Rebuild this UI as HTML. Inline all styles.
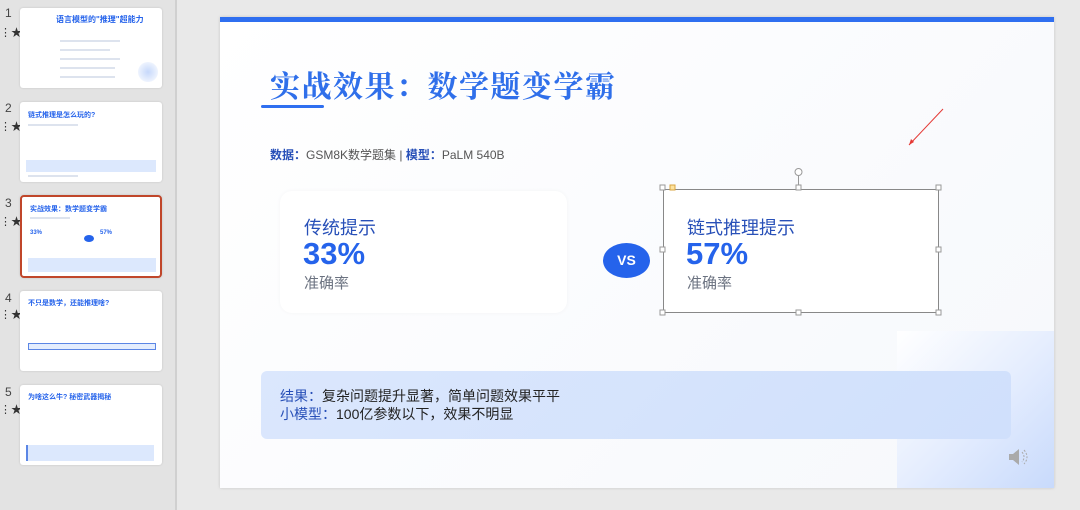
<!DOCTYPE html>
<html><head><meta charset="utf-8"><style>
*{margin:0;padding:0;box-sizing:border-box}
body{width:1080px;height:510px;overflow:hidden;background:#e9e9e9;font-family:"Liberation Sans","Noto Sans CJK SC",sans-serif;position:relative}
.abs{position:absolute}
.side{left:0;top:0;width:177px;height:510px;background:#e3e3e3;border-right:2px solid #d0d0d0}
.num{left:5px;font-size:12px;color:#444}
.star{left:0;font-size:11px;color:#333}
.th{left:20px;width:142px;height:80px;background:#fff;border-radius:3px;box-shadow:0 0 2px rgba(0,0,0,.15);overflow:hidden}
.th .t{position:absolute;left:8px;top:7px;font-size:7px;color:#2563eb;font-weight:bold}
.ln{position:absolute;height:2px;background:#dde3ee}
.slide{left:220px;top:17px;width:834px;height:471px;background:linear-gradient(135deg,#fff,#f6f8fc);box-shadow:0 0 3px rgba(0,0,0,.15);overflow:hidden}
</style></head><body>
<div class="abs side"></div>
<div class="abs num" style="top:6px">1</div><div class="abs star" style="top:24px">⋮★</div>
<div class="abs num" style="top:101px">2</div><div class="abs star" style="top:118px">⋮★</div>
<div class="abs num" style="top:196px">3</div><div class="abs star" style="top:213px">⋮★</div>
<div class="abs num" style="top:291px">4</div><div class="abs star" style="top:306px">⋮★</div>
<div class="abs num" style="top:385px">5</div><div class="abs star" style="top:401px">⋮★</div>

<div class="abs th" style="top:8px"><div class="t" style="left:36px;top:6px;font-size:8px">语言模型的"推理"超能力</div>
<div class="ln" style="left:40px;top:32px;width:60px"></div><div class="ln" style="left:40px;top:41px;width:50px"></div><div class="ln" style="left:40px;top:50px;width:60px"></div><div class="ln" style="left:40px;top:59px;width:55px"></div><div class="ln" style="left:40px;top:68px;width:55px"></div>
<div style="position:absolute;right:4px;bottom:6px;width:20px;height:20px;border-radius:50%;background:radial-gradient(#c6d8fb,#fff0)"></div></div>
<div class="abs th" style="top:102px"><div class="t" style="top:8px">链式推理是怎么玩的?</div><div class="ln" style="left:8px;top:22px;width:50px"></div>
<div style="position:absolute;left:6px;top:58px;width:130px;height:12px;background:#dce8fd"></div><div class="ln" style="left:8px;top:73px;width:50px"></div></div>
<div class="abs th" style="top:195px;height:83px;border:2px solid #c0462a;border-radius:4px"><div class="t">实战效果：数学题变学霸</div>
<div class="ln" style="left:8px;top:20px;width:40px"></div>
<div style="position:absolute;left:8px;top:33px;font-size:6px;color:#2563eb;font-weight:bold">33%</div>
<div style="position:absolute;left:62px;top:38px;width:10px;height:7px;border-radius:50%;background:#2563eb"></div>
<div style="position:absolute;left:78px;top:33px;font-size:6px;color:#2563eb;font-weight:bold">57%</div>
<div style="position:absolute;left:6px;top:61px;width:128px;height:14px;background:#dce8fd"></div></div>
<div class="abs th" style="top:291px"><div class="t">不只是数学，还能推理啥?</div>
<div style="position:absolute;left:8px;top:52px;width:128px;height:7px;border:1px solid #5b86e5;background:#e4edfd"></div></div>
<div class="abs th" style="top:385px"><div class="t">为啥这么牛? 秘密武器揭秘</div>
<div style="position:absolute;left:6px;top:60px;width:128px;height:16px;background:#dce8fd;border-left:2px solid #5b86e5"></div></div>

<div class="abs slide">
<div class="abs" style="left:0;top:0;width:834px;height:5px;background:#2f6ff0"></div>
<div class="abs" style="left:677px;top:314px;width:157px;height:157px;background:linear-gradient(135deg,#fff 0%,#e6eefe 50%,#c8dafc 100%)"></div>
<div class="abs" style="left:50px;top:45px;font-size:30px;color:#2f6fea;letter-spacing:1.5px;font-weight:bold;font-family:'Noto Serif CJK SC','Liberation Serif',serif">实战效果：数学题变学霸</div>
<div class="abs" style="left:41px;top:88px;width:63px;height:3px;background:#2f6ff0;border-radius:2px"></div>
<div class="abs" style="left:50px;top:129px;font-size:12px;color:#555"><b style="color:#2850b8">数据：</b>GSM8K数学题集 | <b style="color:#2850b8">模型：</b>PaLM 540B</div>
<div class="abs" style="left:60px;top:174px;width:287px;height:122px;background:#fff;border-radius:12px;box-shadow:0 0 4px rgba(0,0,0,.04)"></div>
<div class="abs" style="left:84px;top:197px;font-size:18px;color:#2850b8">传统提示</div>
<div class="abs" style="left:83px;top:219px;font-size:31px;color:#2563eb;font-weight:bold">33%</div>
<div class="abs" style="left:84px;top:255px;font-size:15px;color:#6b7280">准确率</div>
<div class="abs" style="left:383px;top:226px;width:47px;height:35px;border-radius:50%;background:#2563eb;color:#fff;font-weight:bold;font-size:14px;text-align:center;line-height:35px">VS</div>
<div class="abs" style="left:443px;top:172px;width:276px;height:124px;border:1.5px solid #888;background:#fff"></div>
<div class="abs" style="left:467px;top:197px;font-size:18px;color:#2850b8">链式推理提示</div>
<div class="abs" style="left:466px;top:219px;font-size:31px;color:#2563eb;font-weight:bold">57%</div>
<div class="abs" style="left:467px;top:255px;font-size:15px;color:#6b7280">准确率</div>
<svg class="abs" style="left:435px;top:148px" width="294" height="156">
<g fill="#fff" stroke="#999" stroke-width="1">
<rect x="5" y="20" width="5" height="5"/><rect x="141" y="20" width="5" height="5"/><rect x="281" y="20" width="5" height="5"/>
<rect x="5" y="82" width="5" height="5"/><rect x="281" y="82" width="5" height="5"/>
<rect x="5" y="145" width="5" height="5"/><rect x="141" y="145" width="5" height="5"/><rect x="281" y="145" width="5" height="5"/>
<rect x="15" y="20" width="5" height="5" fill="#fde3a0" stroke="#d9a541"/>
<line x1="143.5" y1="11" x2="143.5" y2="20"/><circle cx="143.5" cy="7" r="3.5"/></g></svg>
<svg class="abs" style="left:685px;top:90px" width="40" height="42"><line x1="38" y1="2" x2="4" y2="38" stroke="#e53935" stroke-width="1"/><path d="M4 38 L6 32 L9 35Z" fill="#e53935"/></svg>
<div class="abs" style="left:41px;top:354px;width:750px;height:68px;border-radius:6px;background:linear-gradient(135deg,#dbe7fd,#d0e0fc)"></div>
<div class="abs" style="left:60px;top:370px;font-size:14px;line-height:18px;color:#222"><span style="color:#2850b8">结果：</span>复杂问题提升显著，简单问题效果平平<br><span style="color:#2850b8">小模型：</span>100亿参数以下，效果不明显</div>
<svg class="abs" style="left:788px;top:430px" width="22" height="20"><path d="M1 7 H5 L11 2 V18 L5 13 H1Z" fill="#aaa"/><path d="M14 5 Q18 10 14 15 M16 3 Q22 10 16 17" stroke="#aaa" stroke-dasharray="2 1.5" fill="none"/></svg>
</div>
</body></html>
